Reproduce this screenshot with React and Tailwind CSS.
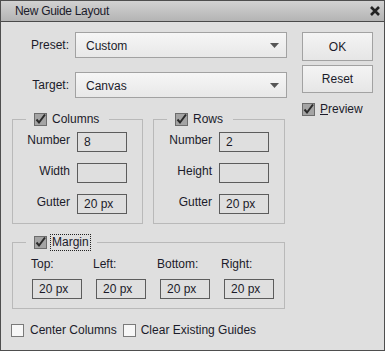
import React from "react";

function CheckBox({ checked }) {
  if (!checked) {
    return (
      <span className="block w-[13px] h-[13px] shrink-0 border border-[#7a7a7a] bg-[#f7f7f7]" />
    );
  }
  return (
    <svg width="13" height="13" viewBox="0 0 13 13" className="shrink-0 block overflow-visible">
      <rect x="0.5" y="0.5" width="12" height="12" fill="#a4a4a4" stroke="#6c6c6c" />
      <path d="M2.5 6.5 L5 9.5 L11 1.5" fill="none" stroke="#2a2a2a" strokeWidth="2" />
    </svg>
  );
}

function Field({ value }) {
  return (
    <div className="w-[50px] h-[20px] border border-[#5c5c5c] bg-[#dfdfdf] pl-[6px] flex items-center text-[12px] leading-none text-[#1b1b2a]">
      {value}
    </div>
  );
}

function Select({ value }) {
  return (
    <div className="w-[212px] h-[26px] border border-[#a2a2a2] bg-gradient-to-b from-[#f6f6f6] to-[#e8e8e8] flex items-center pl-[10px] pr-[7px]">
      <span className="flex-1 text-[12px] text-[#1b1b2a] pt-[2px]">{value}</span>
      <svg width="9" height="5" viewBox="0 0 9 5">
        <path d="M0 0 H9 L4.5 5 Z" fill="#555" />
      </svg>
    </div>
  );
}

function Button({ children, h }) {
  return (
    <div
      className={`w-[71px] ${h} border border-[#a2a2a2] bg-gradient-to-b from-[#f4f4f4] to-[#e6e6e6] flex items-center justify-center text-[12px] text-[#1b1b2a]`}
    >
      {children}
    </div>
  );
}

function Row({ label, value, labelW }) {
  return (
    <div className="flex items-center gap-[7px]">
      <span className={`${labelW} text-right text-[12px] text-[#1b1b2a] -mt-[4px]`}>{label}</span>
      <Field value={value} />
    </div>
  );
}

function Group({ title, width, ml, labelW, rows }) {
  return (
    <fieldset className={`${width} ${ml} border border-[#b9b9b9] min-w-0`}>
      <legend className="ml-[13px] pl-[8px] pr-[10px] h-[14px]">
        <span className="flex items-center gap-[5px] h-[14px]">
          <CheckBox checked />
          <span className="text-[12px] text-[#1b1b2a] leading-[14px]">{title}</span>
        </span>
      </legend>
      <div className="pt-[6px] pb-[9px] flex flex-col gap-[11px]">
        {rows.map((r) => (
          <Row key={r[0]} label={r[0]} value={r[1]} labelW={labelW} />
        ))}
      </div>
    </fieldset>
  );
}

export default function App() {
  return (
    <div className="w-[385px] h-[351px] border border-[#4e4e4e] bg-[#dfdfdf] flex flex-col font-['Liberation_Sans',Arial,sans-serif] text-[#1b1b2a] overflow-hidden">
      {/* TITLE BAR */}
      <div className="h-[21px] shrink-0 border-b border-[#4a4a4a] bg-gradient-to-b from-[#d2d2d2] to-[#b4b4b4] flex items-center pl-[14px] pr-[3px]">
        <span className="flex-1 text-[12px] tracking-[-0.3px] text-[#1b1b2a]">New Guide Layout</span>
        <svg width="10" height="10" viewBox="0 0 10 10" className="mr-[1px]">
          <path d="M1 1 L9 9 M9 1 L1 9" stroke="#222" strokeWidth="2.6" />
        </svg>
      </div>

      {/* BODY */}
      <div className="flex pt-[10px]">
        <div className="w-[286px] flex flex-col">
          <div className="flex items-center gap-[6px]">
            <span className="w-[68px] text-right text-[12px]">Preset:</span>
            <Select value="Custom" />
          </div>
          <div className="flex items-center gap-[6px] mt-[14px]">
            <span className="w-[68px] text-right text-[12px]">Target:</span>
            <Select value="Canvas" />
          </div>

          <div className="flex mt-[14px]">
            <Group
              title="Columns"
              width="w-[131px]"
              ml="ml-[11px]"
              labelW="w-[57px]"
              rows={[["Number", "8"], ["Width", ""], ["Gutter", "20 px"]]}
            />
            <Group
              title="Rows"
              width="w-[132px]"
              ml="ml-[10px]"
              labelW="w-[58px]"
              rows={[["Number", "2"], ["Height", ""], ["Gutter", "20 px"]]}
            />
          </div>

          <fieldset className="w-[273px] ml-[11px] mt-[10px] border border-[#b9b9b9] min-w-0">
            <legend className="ml-[13px] pl-[8px] pr-[6px] h-[17px]">
              <span className="flex items-center gap-[3px] h-[17px]">
                <CheckBox checked />
                <span className="border border-dotted border-[#222] h-[17px] px-[1px] text-[12px] leading-[15px]">
                  Margin
                </span>
              </span>
            </legend>
            <div className="pl-[19px] pt-[6px] pb-[9px] grid grid-cols-[64px_64px_64px_64px]">
              {["Top:", "Left:", "Bottom:", "Right:"].map((l, i) => (
                <div key={l} className="flex flex-col">
                  <span className={`text-[12px] leading-[14px] h-[14px] ${i === 0 ? "-ml-[1px]" : "-ml-[3px]"}`}>{l}</span>
                  <div className="mt-[8px]">
                    <Field value="20 px" />
                  </div>
                </div>
              ))}
            </div>
          </fieldset>

          <div className="flex items-center h-[14px] mt-[14px] ml-[10px] text-[12px]">
            <CheckBox />
            <span className="ml-[6px]">Center Columns</span>
            <span className="ml-[6px]">
              <CheckBox />
            </span>
            <span className="ml-[5px]">Clear Existing Guides</span>
          </div>
        </div>

        {/* RIGHT BUTTONS */}
        <div className="ml-[15px] flex flex-col">
          <Button h="h-[29px]">OK</Button>
          <div className="mt-[4px]">
            <Button h="h-[28px]">Reset</Button>
          </div>
          <div className="mt-[7px] flex items-center gap-[5px] text-[12px]">
            <CheckBox checked />
            <span>
              <span className="underline">P</span>review
            </span>
          </div>
        </div>
      </div>
    </div>
  );
}
